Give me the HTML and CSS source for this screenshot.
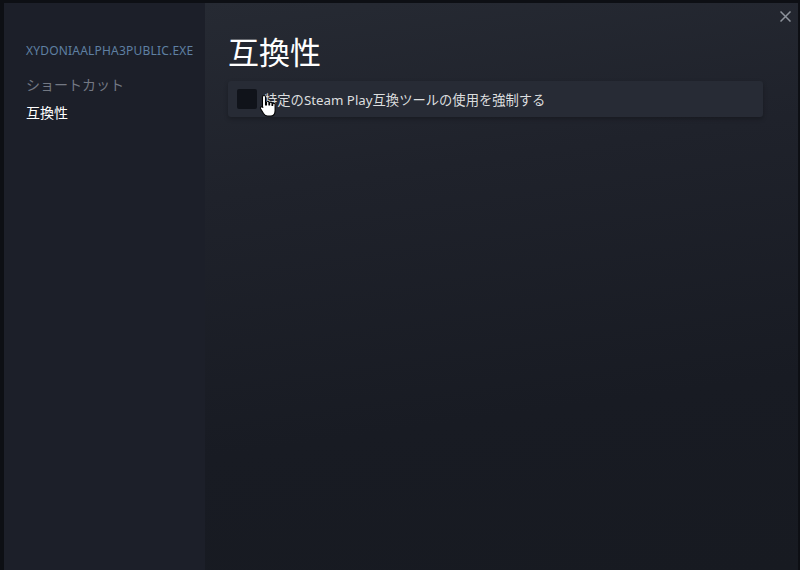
FILE: index.html
```html
<!DOCTYPE html>
<html lang="ja">
<head>
    <meta charset="UTF-8">
    <title>プロパティ - 互換性</title>
    <link rel="stylesheet" href="styles.css">
</head>
<body>
    <div class="frame">
        <nav class="sidebar">
            <div class="app-name">XYDONIAALPHA3PUBLIC.EXE</div>
            <a class="nav-item">ショートカット</a>
            <a class="nav-item active">互換性</a>
        </nav>

        <main class="content">
            <button class="close" aria-label="閉じる">
                <svg width="11" height="11" viewBox="0 0 11 11">
                    <path d="M0.5 0.5 L10.5 10.5 M10.5 0.5 L0.5 10.5" stroke="#8d939c" stroke-width="1.5" fill="none"/>
                </svg>
            </button>
            <h1>互換性</h1>
            <label class="option">
                <span class="checkbox"></span>
                <span class="option-label">特定のSteam Play互換ツールの使用を強制する</span>
                <!-- mouse pointer from the screenshot -->
                <svg class="pointer" width="20" height="24" viewBox="0 0 20 24">
                    <path d="M5 1.5 C6 1.5 6.5 2.2 6.5 3 L6.5 11 L7.5 11 L7.5 8.5 C7.5 7.8 8 7.3 8.7 7.3 C9.4 7.3 9.9 7.8 9.9 8.5 L9.9 11 L10.6 11 L10.6 9.3 C10.6 8.6 11.1 8.1 11.8 8.1 C12.5 8.1 13 8.6 13 9.3 L13 11.5 L13.7 11.5 L13.7 10.4 C13.7 9.7 14.2 9.2 14.9 9.2 C15.6 9.2 16.1 9.7 16.1 10.4 L16.1 16.5 C16.1 19.5 14.5 22 11.5 22 L8.5 22 C6.5 22 5.5 21 4.5 19.5 L1.6 14.8 C1.2 14.1 1.4 13.3 2.1 12.9 C2.8 12.5 3.5 12.8 3.9 13.4 L3.5 12.8 L3.5 3 C3.5 2.2 4 1.5 5 1.5 Z" fill="#ffffff" stroke="#000000" stroke-width="1.1" stroke-linejoin="round"/>
                </svg>
            </label>
        </main>
    </div>
</body>
</html>
```

FILE: styles.css
```css
html, body {
    margin: 0;
    padding: 0;
    height: 100%;
}
body {
    background-color: #0d0f14;
    font-family: 'Noto Sans', 'Noto Sans CJK JP', sans-serif;
    color: #dcdedf;
    overflow: hidden;
}
.frame {
    display: flex;
    height: 570px;
    box-sizing: border-box;
    padding: 3px 2px 0 4px;
}
.sidebar {
    width: 201px;
    flex-shrink: 0;
    background-color: #1c1f29;
    padding: 39px 0 0 22px;
    box-sizing: border-box;
    display: flex;
    flex-direction: column;
}
.app-name {
    color: #5f80a3;
    font-size: 12px;
    letter-spacing: 0.2px;
    line-height: 18px;
    margin-bottom: 11px;
}
.nav-item {
    font-size: 14px;
    line-height: 28px;
    color: #737883;
    cursor: pointer;
}
.nav-item.active {
    color: #ffffff;
}
.content {
    flex: 1;
    position: relative;
    background: linear-gradient(172deg, #262a33 0%, #1f222b 30%, #181b23 70%, #171a21 100%);
    padding: 28px 35px 0 23px;
    box-sizing: border-box;
}
.close {
    position: absolute;
    top: 7px;
    right: 7px;
    background: none;
    border: none;
    padding: 0;
    cursor: pointer;
}
h1 {
    margin: 0 0 8px 0;
    font-size: 31px;
    font-weight: 400;
    line-height: 42px;
    color: #ffffff;
}
.option {
    position: relative;
    display: flex;
    align-items: center;
    gap: 7px;
    height: 36px;
    padding: 0 9px;
    background-color: #272b35;
    border-radius: 3px;
    box-shadow: 0 2px 4px rgba(0, 0, 0, 0.25);
    cursor: pointer;
}
.checkbox {
    width: 20px;
    height: 20px;
    background-color: #10131a;
    border-radius: 2px;
    flex-shrink: 0;
}
.option-label {
    font-size: 13.3px;
    color: #dcdedf;
}
.pointer {
    position: absolute;
    left: 31px;
    top: 13px;
}
```
